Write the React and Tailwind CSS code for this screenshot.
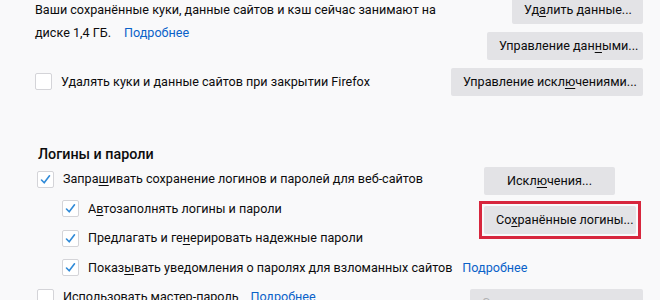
import React from 'react';

// --- Small building blocks ---

const Check = ({ checked }) => (
    <span className="flex-none w-[17px] h-[17px] bg-white border border-[#d4d4d8] rounded-[2px] flex items-center justify-center">
        {checked && (
            <svg width="13" height="13" viewBox="0 0 13 13">
                <path d="M2.5 7 L5.2 9.8 L10.5 2.8" fill="none" stroke="#2f8ad8" strokeWidth="1.6" strokeLinecap="round" strokeLinejoin="round" />
            </svg>
        )}
    </span>
);

const Btn = ({ children, className = '', disabled }) => (
    <button className={`h-[28px] px-[12px] bg-[#e3e3e6] rounded-[2px] whitespace-nowrap ${disabled ? 'text-[#b1b1b3]' : 'text-[#0c0c0d]'} ${className}`}>
        {children}
    </button>
);

const Link = ({ children }) => <a href="#" className="text-[#0a62c9]">{children}</a>;

const U = ({ children }) => <span className="underline underline-offset-2">{children}</span>;

const Row = ({ checked, indent, children, className = '' }) => (
    <div className={`flex items-center h-[29.5px] ${indent ? 'pl-[25px]' : ''} ${className}`}>
        <Check checked={checked} />
        <span className="ml-[9px] whitespace-nowrap">{children}</span>
    </div>
);

export default function App() {
    return (
        <div className="w-[660px] h-[300px] overflow-hidden bg-[#f9f9fa] text-[#0c0c0d] text-[12.6px] leading-[20px] pl-[35px] pr-[17px]" style={{ fontFamily: 'Roboto, "Noto Sans", sans-serif' }}>
            {/* cookies section */}
            <div className="-mt-[4px] grid grid-cols-[1fr_auto]">
                <div className="pt-[2px] whitespace-nowrap">
                    <p className="leading-[23px]">Ваши сохранённые куки, данные сайтов и кэш сейчас занимают на</p>
                    <p className="leading-[23px]">диске 1,4 ГБ.<span className="inline-block w-[13px]"></span><Link>Подробнее</Link></p>
                </div>
                <div className="flex flex-col items-end gap-[8px]">
                    <Btn className="w-[131px] px-0">Уд<U>а</U>лить данные...</Btn>
                    <Btn className="w-[156px] px-0">Управление дан<U>н</U>ыми...</Btn>
                </div>
            </div>
            <div className="mt-[7px] grid grid-cols-[1fr_auto] items-center">
                <Row>Удалять куки и данные сайтов при закрытии Firefox</Row>
                <Btn className="w-[192px] px-0">Управление искл<U>ю</U>чениями...</Btn>
            </div>

            {/* logins section */}
            <h2 className="mt-[46px] pl-[3px] text-[14.3px] font-medium leading-[22px]">Логины и пароли</h2>
            <div className="grid grid-cols-[1fr_164px]">
                <div className="pl-[2px] min-w-0">
                    <Row checked>Запра<U>ш</U>ивать сохранение логинов и паролей для веб-сайтов</Row>
                    <Row checked indent>А<U>в</U>тозаполнять логины и пароли</Row>
                    <Row checked indent>Предлагать и ге<U>н</U>ерировать надежные пароли</Row>
                    <Row checked indent>Показ<U>ы</U>вать уведомления о паролях для взломанных сайтов<span className="inline-block w-[10px]"></span><Link>Подробнее</Link></Row>
                    <Row>Использовать мастер-пароль<span className="inline-block w-[12px]"></span><Link>Подробнее</Link></Row>
                </div>
                <div className="pt-[2px] flex flex-col items-start">
                    <Btn className="ml-[5px] w-[131px] px-0">Искл<U>ю</U>чения...</Btn>
                    <div className="mt-[6px] border-[3px] border-[#d7263d] p-[2px]">
                        <Btn className="w-[152px] px-0">Со<U>х</U>ранённые логины...</Btn>
                    </div>
                    <Btn disabled className="mt-[50px] -ml-[9px] w-[173px] px-0">Сменить мастер-пароль...</Btn>
                </div>
            </div>
        </div>
    );
}
